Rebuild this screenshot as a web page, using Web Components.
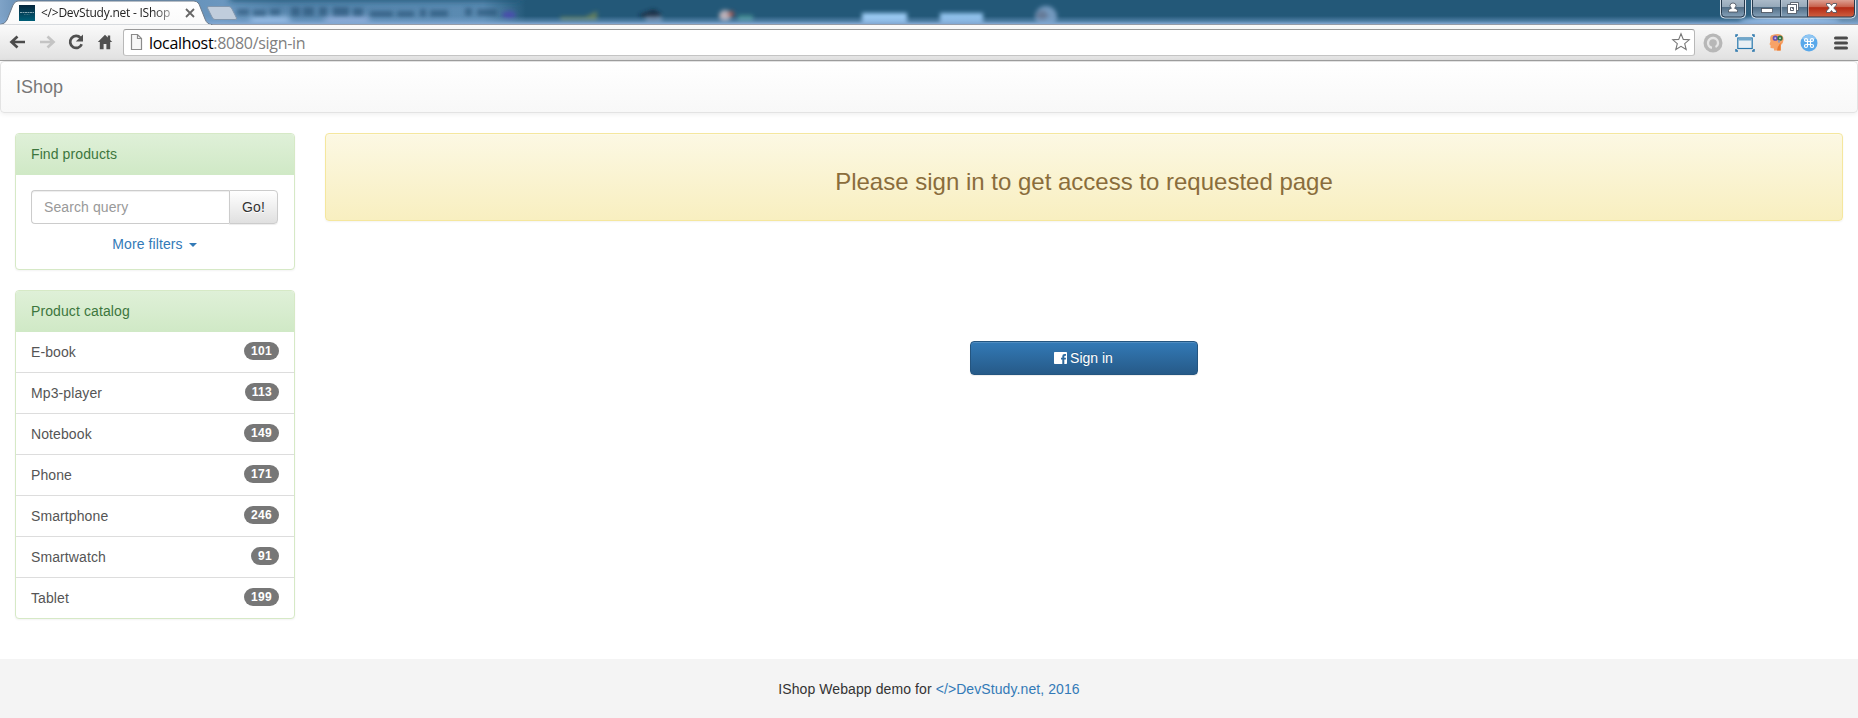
<!DOCTYPE html>
<html lang="en"><head><meta charset="utf-8"><title>&lt;/&gt;DevStudy.net - IShop</title>
<style>
html,body{margin:0;height:100%}
body{font:14px/20px "Liberation Sans",Arial,sans-serif;color:#333;background:#fff;overflow:hidden}
</style></head><body>
<shop-window></shop-window>
<script>
const define = (name, html) => customElements.define(name, class extends HTMLElement {
  constructor(){ super(); const t=document.createElement('template'); t.innerHTML=html; this.attachShadow({mode:'open'}).append(t.content.cloneNode(true)); }
});

define('window-titlebar', `<style>
:host{display:block;position:relative;height:25px;overflow:hidden;font:12px/16px "Open Sans","Noto Sans",sans-serif;color:#222}
svg.bg{position:absolute;left:0;top:0}
.tab{position:relative;display:flex;align-items:center;height:25px;box-sizing:border-box;padding:1px 0 0 19px;width:207px}
.tab .fav{flex:none}
.title{margin-left:6px;width:137px;white-space:nowrap;letter-spacing:-.24px;-webkit-mask:linear-gradient(90deg,#000 112px,rgba(0,0,0,.35) 132px)}
.close{margin-left:4px;flex:none}
</style>
<svg class="bg" width="1858" height="25">
<defs>
<linearGradient id="sky" x1="0" x2="1" y1="0" y2="0"><stop offset="0" stop-color="#7fa3c7"/><stop offset=".02" stop-color="#557fa8"/><stop offset=".12" stop-color="#6b97bf"/><stop offset=".15" stop-color="#5685ac"/><stop offset=".26" stop-color="#5b8bb2"/><stop offset=".283" stop-color="#235878"/><stop offset=".93" stop-color="#235878"/><stop offset=".965" stop-color="#47738f"/><stop offset="1" stop-color="#6084a0"/></linearGradient>
<linearGradient id="edge" x1="0" x2="0" y1="0" y2="1"><stop offset="0" stop-color="#7fa7d3" stop-opacity="0"/><stop offset=".6" stop-color="#7fa7d3" stop-opacity=".45"/><stop offset="1" stop-color="#83a8d2"/></linearGradient>
<linearGradient id="tab" x1="0" x2="0" y1="0" y2="1"><stop offset="0" stop-color="#fff"/><stop offset="1" stop-color="#fafafa"/></linearGradient>
<linearGradient id="glass" x1="0" x2="0" y1="0" y2="1"><stop offset="0" stop-color="#b4c2cf"/><stop offset=".48" stop-color="#95a8b9"/><stop offset=".5" stop-color="#536f87"/><stop offset="1" stop-color="#8ba7bf"/></linearGradient>
<linearGradient id="red" x1="0" x2="0" y1="0" y2="1"><stop offset="0" stop-color="#dda092"/><stop offset=".4" stop-color="#c8614c"/><stop offset=".45" stop-color="#b42a14"/><stop offset="1" stop-color="#cf6040"/></linearGradient>
<filter id="b" x="-50%" y="-100%" width="200%" height="300%"><feGaussianBlur stdDeviation="3"/></filter>
<filter id="b2" x="-50%" y="-100%" width="200%" height="300%"><feGaussianBlur stdDeviation="2"/></filter>
</defs>
<rect width="1858" height="25" fill="url(#sky)"/>
<g filter="url(#b)"><rect x="230" y="-6" width="290" height="7" fill="#1f5576"/>
<rect x="250" y="17" width="40" height="10" rx="4" fill="#a4c8ef"/><rect x="325" y="17" width="44" height="9" fill="#98b1de"/>
</g>
<g filter="url(#b2)" fill="#275174" opacity=".62"><rect x="237" y="9" width="12" height="6"/><rect x="253" y="10" width="13" height="6"/><rect x="270" y="9" width="10" height="6"/><rect x="291" y="7" width="9" height="9"/><rect x="303" y="7" width="11" height="9"/><rect x="319" y="7" width="8" height="9"/><rect x="333" y="7" width="16" height="9"/><rect x="353" y="8" width="10" height="8"/><rect x="370" y="11" width="23" height="6"/><rect x="397" y="11" width="17" height="6"/><rect x="420" y="9" width="6" height="8"/><rect x="430" y="10" width="18" height="7"/><rect x="465" y="8" width="7" height="8"/><rect x="477" y="9" width="20" height="7"/></g>
<g filter="url(#b2)"><ellipse cx="509" cy="15" rx="7" ry="4" fill="#4850ac"/>
<path d="M560 17h25l12-6v10h-36z" fill="#8b9650" opacity=".6"/><path d="M638 15l16-6 8 6-8 7z" fill="#16243b" opacity=".8"/><rect x="646" y="17" width="16" height="7" fill="#8098b5" opacity=".7"/>
<circle cx="725" cy="16" r="6" fill="#b9b0b8"/><circle cx="731" cy="14" r="3" fill="#a1554e"/><rect x="738" y="15" width="15" height="7" fill="#53a19c" opacity=".7"/>
<rect x="862" y="13" width="45" height="15" fill="#9cccf5"/><rect x="940" y="13" width="43" height="15" fill="#92c3ed"/>
<circle cx="1046" cy="17" r="11" fill="#87a9cf" opacity=".8"/><circle cx="1042" cy="16" r="6" fill="#667b99"/>
<ellipse cx="1790" cy="22" rx="50" ry="5" fill="#9fc4ed"/></g>
<rect y="16" width="1858" height="8" fill="url(#edge)"/>
<rect y="24" width="1858" height="1" fill="#969ca8"/>
<path d="M0 25V24.500Q5 24 7 20L13 5Q15 1 18 1H194Q197 1 199 4L205 19Q207 24.500 212 24.500V25z" fill="url(#tab)" stroke="#6e7c8c" stroke-width="1"/>
<path d="M0 25.500H211" stroke="#fafafa" stroke-width="2"/>
<path d="M209 6.500H229Q231 6.500 232 9L236.500 18Q237 19.500 235 19.500H215Q213 19.500 212 17L207.500 8Q207 6.500 209 6.500z" fill="#c0cddc" stroke="#8297ae"/>
<path d="M1720.500 -3V14Q1720.500 18 1724.500 18H1741.500Q1745.500 18 1745.500 14V-3" fill="url(#glass)" stroke="#d5dfe8"/>
<path d="M1721.500 -3V13.500Q1721.500 17 1725 17H1741Q1744.500 17 1744.500 13.500V-3" fill="none" stroke="#273a4d"/>
<path d="M1751.500 -3V14Q1751.500 18 1755.500 18H1851.500Q1855.500 18 1855.500 14V-3" fill="url(#glass)" stroke="#d5dfe8"/>
<path d="M1808 0H1854.500V13.500Q1854.500 17 1851 17H1808z" fill="url(#red)"/>
<path d="M1752.500 -3V13.500Q1752.500 17 1756 17H1851Q1854.500 17 1854.500 13.500V-3M1780.500 0V17M1807.500 0V17" fill="none" stroke="#273a4d"/>
<path d="M1781.500 0V16M1808.500 0V16" stroke="#ccd6df" stroke-opacity=".6"/>
<g fill="#fff" stroke="#454d59" stroke-width=".8"><path d="M1728.500 12V10.500Q1729 8.500 1731.500 8.300Q1730 7 1730 5.500Q1730.200 3 1733 3T1736 5.500Q1736 7 1734.500 8.300Q1737 8.500 1737.500 10.500V12z"/><rect x="1761.500" y="8.500" width="11" height="4"/>
<path fill-rule="evenodd" d="M1790.500 2.500H1798.500V10.500H1790.500zM1792.500 4.500V8.500H1796.500V4.500z"/><path fill-rule="evenodd" d="M1787.500 4.500H1796.500V13.500H1787.500zM1790.500 7.500V10.500H1793.500V7.500z"/>
<path d="M1826.500 3.500H1830L1831.500 5.500L1833 3.500H1836.500V5L1833.700 8L1836.500 11V12.500H1833L1831.500 10.500L1830 12.500H1826.500V11L1829.300 8L1826.500 5z"/></g>
</svg>
<div class="tab"><svg class="fav" width="16" height="16"><defs><linearGradient id="f" x1="0" x2="0" y1="0" y2="1"><stop stop-color="#06263c"/><stop offset="1" stop-color="#005f78"/></linearGradient></defs><rect width="16" height="16" fill="url(#f)"/><path d="M1 7.500H15" stroke="#aac2c9" stroke-width=".8" stroke-dasharray="2 .5"/><path d="M5 9.500H11" stroke="#65919c" stroke-width=".5" stroke-dasharray="1 .5"/></svg><span class="title">&lt;/&gt;DevStudy.net - IShop</span><svg class="close" width="16" height="16"><path d="M4 4L12 12M12 4L4 12" stroke="#666" stroke-width="1.800"/></svg></div>`);

define('browser-toolbar', `<style>
:host{display:flex;align-items:center;box-sizing:border-box;height:36px;padding:0 7px 1px 8px;border-bottom:1px solid #a0a0a0;background:linear-gradient(#fafafa,#e1e1e1)}
.nav{display:flex;gap:9px;width:115px}
.box{flex:1;display:flex;align-items:center;height:27px;box-sizing:border-box;border:1px solid #b8b8b8;border-top-color:#999;border-bottom-color:#c4c4c4;border-radius:3px;background:#fff;padding:0 3px 0 5px;font:16px/24px "Open Sans","Noto Sans",sans-serif;color:#808080}
.url{flex:1;margin-left:6px;padding-top:1px;letter-spacing:-.3px}
b{font-weight:400;color:#000}
.ext{display:flex;align-items:center;gap:12px;margin-left:8px;padding-top:1px}
svg{display:block;flex:none}
</style>
<div class="nav">
<svg width="20" height="20"><path d="M17 10H4M9.500 4.500L3.500 10L9.500 15.500" fill="none" stroke="#4c4c4c" stroke-width="2.700"/></svg>
<svg width="20" height="20"><path d="M3 10H16M10.500 4.500L16.500 10L10.500 15.500" fill="none" stroke="#c4c4c4" stroke-width="2.700"/></svg>
<svg width="20" height="20"><path d="M14.600 5.900A6 6 0 1 0 15.700 12.300" fill="none" stroke="#505050" stroke-width="2.700"/><path d="M17 2.500V9.500H9.800z" fill="#505050"/></svg>
<svg width="20" height="20"><path d="M10 2.800L2.800 10H4.800V17.200H8.600V12H11.400V17.200H15.200V10H17.200L15.200 8V3.500H12.800V5.600z" fill="#505050"/></svg>
</div>
<div class="box"><svg width="14" height="18"><path d="M2.500 1.500H8.500L12.500 5.500V16.500H2.500zM8.500 1.500V5.500H12.500" fill="#f7f7f7" stroke="#8b8b8b" stroke-width="1.200"/></svg><span class="url"><b>localhost</b>:8080/sign-in</span>
<svg width="20" height="20"><path d="M10 1.800L12.300 7.400L18.200 7.800L13.700 11.600L15.200 17.500L10 14.300L4.800 17.500L6.300 11.600L1.800 7.800L7.700 7.400z" fill="#fff" stroke="#777" stroke-width="1.100"/></svg></div>
<div class="ext">
<svg width="20" height="20"><circle cx="10" cy="10" r="9.500" fill="#b7b7b7"/><path d="M9 14.900A5 5 0 1 1 15 10.500Q14.800 13 12.500 14" fill="none" stroke="#e6e6e6" stroke-width="2.400"/><circle cx="10" cy="10" r="2.200" fill="#b7b7b7"/><path d="M10.500 9V15.500" stroke="#b7b7b7" stroke-width="2"/></svg>
<svg width="20" height="18"><path d="M1 3V1H3M17 1H19V3M1 15V17H3M17 17H19V15" fill="none" stroke="#2c78ad" stroke-width="1.500"/><rect x="2.800" y="4" width="14.400" height="10.500" fill="#e8eff4" stroke="#2978ad" stroke-width="1.200"/><path d="M3.500 5.500H16.500" stroke="#6fa7cb" stroke-width="2"/></svg>
<svg width="20" height="20"><path d="M4 2.500Q7 .8 11 1Q17 1.500 16.500 7Q16.400 10 14 12V17.500H7L7 15.500L3.500 15V12.200L2.500 11.200L3.500 8.200Q2.500 5 4 2.500z" fill="#f7a267"/><path d="M13.500 11V17.500H10Q10.500 12 15 9z" fill="#e97931"/><circle cx="8.300" cy="5.200" r="1.800" fill="#c9c4e8" stroke="#6750b2" stroke-width="1.700"/><circle cx="13" cy="5.200" r="1.800" fill="#c6dccb" stroke="#317245" stroke-width="1.700"/><circle cx="12" cy="8.500" r="1.200" fill="#8b99c4"/></svg>
<svg width="20" height="20"><circle cx="10" cy="10" r="8.500" fill="#58a8ea"/><path d="M3 5.500A8.500 8.500 0 0 1 17 5.500Q10 10 3 5.500z" fill="#8fc6f3"/><path d="M8.500 8.500H7A1.500 1.500 0 1 1 8.500 7V13A1.500 1.500 0 1 1 7 11.500H13A1.500 1.500 0 1 1 11.500 13V7A1.500 1.500 0 1 1 13 8.500z" fill="none" stroke="#fff" stroke-width="1.200"/></svg>
<svg width="20" height="20"><path d="M4.500 5H15.500M4.500 10H15.500M4.500 15H15.500" stroke="#4b4b4b" stroke-width="3" stroke-linecap="round"/></svg>
</div>`);

define('shop-navbar', `<style>
:host{display:flex;align-items:center;height:52px;box-sizing:border-box;padding:0 15px;border:1px solid #e3e3e3;border-radius:4px;background:linear-gradient(#fff,#f8f8f8);box-shadow:inset 0 1px 0 rgba(255,255,255,.15),0 1px 5px rgba(0,0,0,.075);font-size:18px;color:#777;text-shadow:0 1px 0 rgba(255,255,255,.25);margin-bottom:20px}
</style><slot></slot>`);

define('shop-panel', `<style>
:host{display:block;box-sizing:border-box;border:1px solid #d6e9c6;border-radius:4px;background:#fff;box-shadow:0 1px 2px rgba(0,0,0,.05);letter-spacing:.1px}
header{padding:10px 15px;border-bottom:1px solid #d0e9c6;border-radius:3px 3px 0 0;color:#3c763d;background:linear-gradient(#dff0d8,#d0e9c6)}
</style><header><slot name="heading"></slot></header><slot></slot>`);

define('product-search', `<style>
:host{display:block;padding:15px 16px 15px 15px}
.group{display:flex;height:34px}
.field{flex:1;box-sizing:border-box;border:1px solid #ccc;border-right:0;border-radius:4px 0 0 4px;padding:6px 12px;color:#999;box-shadow:inset 0 1px 1px rgba(0,0,0,.075)}
.go{box-sizing:border-box;width:49px;border:1px solid #ccc;border-radius:0 4px 4px 0;padding:6px 12px;color:#333;background:linear-gradient(#fff,#e0e0e0);text-shadow:0 1px 0 #fff;box-shadow:inset 0 1px 0 rgba(255,255,255,.15),0 1px 1px rgba(0,0,0,.075)}
.more{display:flex;justify-content:center;align-items:center;margin-top:10px;color:#337ab7}
i{border:4px solid transparent;border-top-color:currentColor;border-bottom:0;margin:1px 0 0 6px}
</style><div class="group"><div class="field">Search query</div><div class="go">Go!</div></div><div class="more">More filters<i></i></div>`);

define('catalog-item', `<style>
:host{display:flex;justify-content:space-between;align-items:flex-start;height:40px;box-sizing:border-box;padding:10px 15px;color:#555;border-bottom:0}
:host(:not(:last-child)){height:41px;border-bottom:1px solid #ddd}
.n{min-width:10px;padding:3px 7px;font:bold 12px/12px "Liberation Sans",Arial,sans-serif;letter-spacing:.33px;color:#fff;background:#777;border-radius:10px}
</style><slot></slot><span class="n"><slot name="count"></slot></span>`);

define('shop-alert', `<style>
:host{display:block;height:88px;box-sizing:border-box;padding:35px 15px 0;text-align:center;font-size:24px;line-height:26.400px;color:#8a6d3b;border:1px solid #f5e79e;border-radius:4px;background:linear-gradient(#fcf8e3,#f8efc0);text-shadow:0 1px 0 rgba(255,255,255,.2);box-shadow:inset 0 1px 0 rgba(255,255,255,.25),0 1px 2px rgba(0,0,0,.05)}
</style><slot></slot>`);

define('sign-in-button', `<style>
:host{display:flex;justify-content:center;align-items:center;gap:3px;box-sizing:border-box;width:228px;height:34px;padding-right:1px;border:1px solid #245580;border-radius:4px;color:#fff;background:linear-gradient(#337ab7,#265a88);text-shadow:0 -1px 0 rgba(0,0,0,.2);box-shadow:inset 0 1px 0 rgba(255,255,255,.15),0 1px 1px rgba(0,0,0,.075)}
</style><svg width="13" height="12"><path fill-rule="evenodd" fill="#fff" d="M.8 0H12.200Q13 0 13 .8V11.200Q13 12 12.200 12H10.300V7.500H11.800L12 5.700H10.300V4.500Q10.300 3.800 11.200 3.800H12V2.100H10.500Q8.300 2.100 8.300 4.200V5.700H7V7.500H8.300V12H.8Q0 12 0 11.200V.8Q0 0 .8 0z"/></svg><slot></slot>`);

define('shop-footer', `<style>
:host{display:block;height:59px;box-sizing:border-box;padding:20px 0 0;text-align:center;background:#f4f4f4;margin-top:40px;letter-spacing:.09px}
span{color:#337ab7}
</style>IShop Webapp demo for <span>&lt;/&gt;DevStudy.net, 2016</span>`);

const items=[['E-book',101],['Mp3-player',113],['Notebook',149],['Phone',171],['Smartphone',246],['Smartwatch',91],['Tablet',199]];
define('shop-window', `<style>
:host{display:block;width:1858px}
main{display:grid;grid-template-columns:280px 1518px;gap:30px;padding:0 15px}
aside{display:grid;gap:20px}
section{display:flex;flex-direction:column;align-items:center;gap:120px}
shop-alert{width:100%}
</style>
<window-titlebar></window-titlebar><browser-toolbar></browser-toolbar>
<shop-navbar>IShop</shop-navbar>
<main><aside>
<shop-panel><span slot="heading">Find products</span><product-search></product-search></shop-panel>
<shop-panel><span slot="heading">Product catalog</span>${items.map(([n,c])=>`<catalog-item>${n}<span slot="count">${c}</span></catalog-item>`).join('')}</shop-panel>
</aside><section><shop-alert>Please sign in to get access to requested page</shop-alert><sign-in-button>Sign in</sign-in-button></section></main>
<shop-footer></shop-footer>`);
</script></body></html>
